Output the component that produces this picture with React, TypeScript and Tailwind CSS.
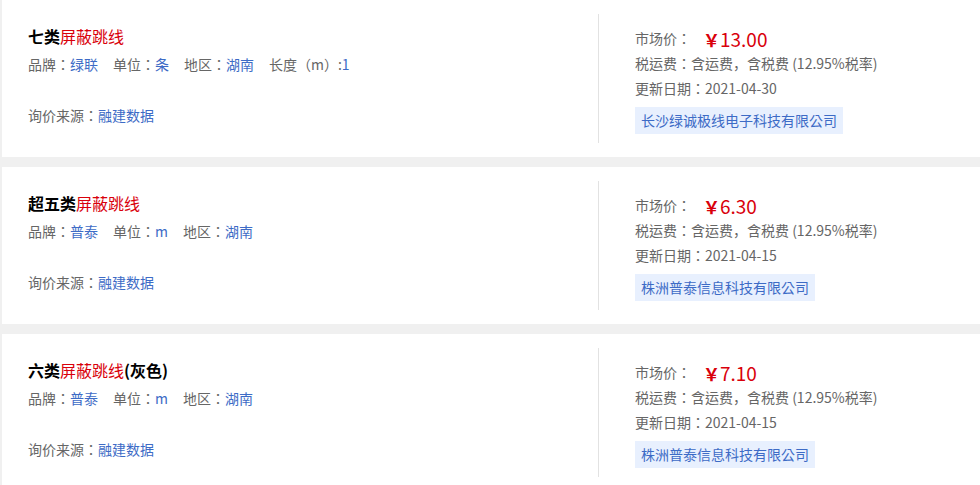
import React from "react";

type Item = {
  black: string;
  red: string;
  suffix?: string;
  attrs: { label: string; value: string }[];
  price: string;
  date: string;
  company: string;
};

const items: Item[] = [
  {
    black: "七类",
    red: "屏蔽跳线",
    attrs: [
      { label: "品牌：", value: "绿联" },
      { label: "单位：", value: "条" },
      { label: "地区：", value: "湖南" },
      { label: "长度（m）:", value: "1" },
    ],
    price: "13.00",
    date: "2021-04-30",
    company: "长沙绿诚极线电子科技有限公司",
  },
  {
    black: "超五类",
    red: "屏蔽跳线",
    attrs: [
      { label: "品牌：", value: "普泰" },
      { label: "单位：", value: "m" },
      { label: "地区：", value: "湖南" },
    ],
    price: "6.30",
    date: "2021-04-15",
    company: "株洲普泰信息科技有限公司",
  },
  {
    black: "六类",
    red: "屏蔽跳线",
    suffix: "(灰色)",
    attrs: [
      { label: "品牌：", value: "普泰" },
      { label: "单位：", value: "m" },
      { label: "地区：", value: "湖南" },
    ],
    price: "7.10",
    date: "2021-04-15",
    company: "株洲普泰信息科技有限公司",
  },
];

function Card({ item }: { item: Item }) {
  return (
    <div className="bg-white h-[157px] shrink-0 flex py-[14px]">
      <div className="w-[596px] shrink-0 pl-[26px] pt-[10px]">
        <div className="h-[24px] leading-[24px] text-[16px]">
          <span className="font-bold text-black">{item.black}</span>
          <span className="text-[#d9000b]">{item.red}</span>
          {item.suffix && <span className="font-bold text-black">{item.suffix}</span>}
        </div>
        <div className="mt-[4px] h-[24px] leading-[24px] text-[14px] text-[#666] flex gap-[15px]">
          {item.attrs.map((a, i) => (
            <span key={i}>
              {a.label}
              <span className="text-[#3d6bc6]">{a.value}</span>
            </span>
          ))}
        </div>
        <div className="mt-[27px] h-[24px] leading-[24px] text-[14px] text-[#666]">
          询价来源：<span className="text-[#3d6bc6]">融建数据</span>
        </div>
      </div>
      <div className="border-l border-[#e2e2e2] pl-[36px] pt-[12px] flex-1">
        <div className="h-[25px] flex items-center text-[14px] text-[#666]">
          <span>市场价：</span>
          <span className="ml-[12px] text-[#d9000b] text-[19px] leading-[25px]">
            <span className="font-bold text-[17px]">￥</span>
            {item.price}
          </span>
        </div>
        <div className="h-[25px] leading-[25px] text-[14px] text-[#666]">
          税运费：含运费
          <span style={{ fontFamily: '"Noto Sans CJK SC", sans-serif' }}>，</span>
          含税费 (12.95%税率)
        </div>
        <div className="h-[25px] leading-[25px] text-[14px] text-[#666]">
          更新日期：{item.date}
        </div>
        <div className="mt-[6px] inline-block h-[27px] leading-[27px] px-[6px] bg-[#e8f0fe] text-[14px] text-[#3d6bc6]">
          {item.company}
        </div>
      </div>
    </div>
  );
}

export default function App() {
  return (
    <div
      className="w-[980px] h-[485px] overflow-hidden bg-[#f0f0f0] pl-[2px] flex flex-col gap-[10px]"
      style={{ fontFamily: '"Noto Sans CJK TC", "Noto Sans CJK SC", "Noto Sans", sans-serif' }}
    >
      {items.map((it, i) => (
        <Card key={i} item={it} />
      ))}
    </div>
  );
}
